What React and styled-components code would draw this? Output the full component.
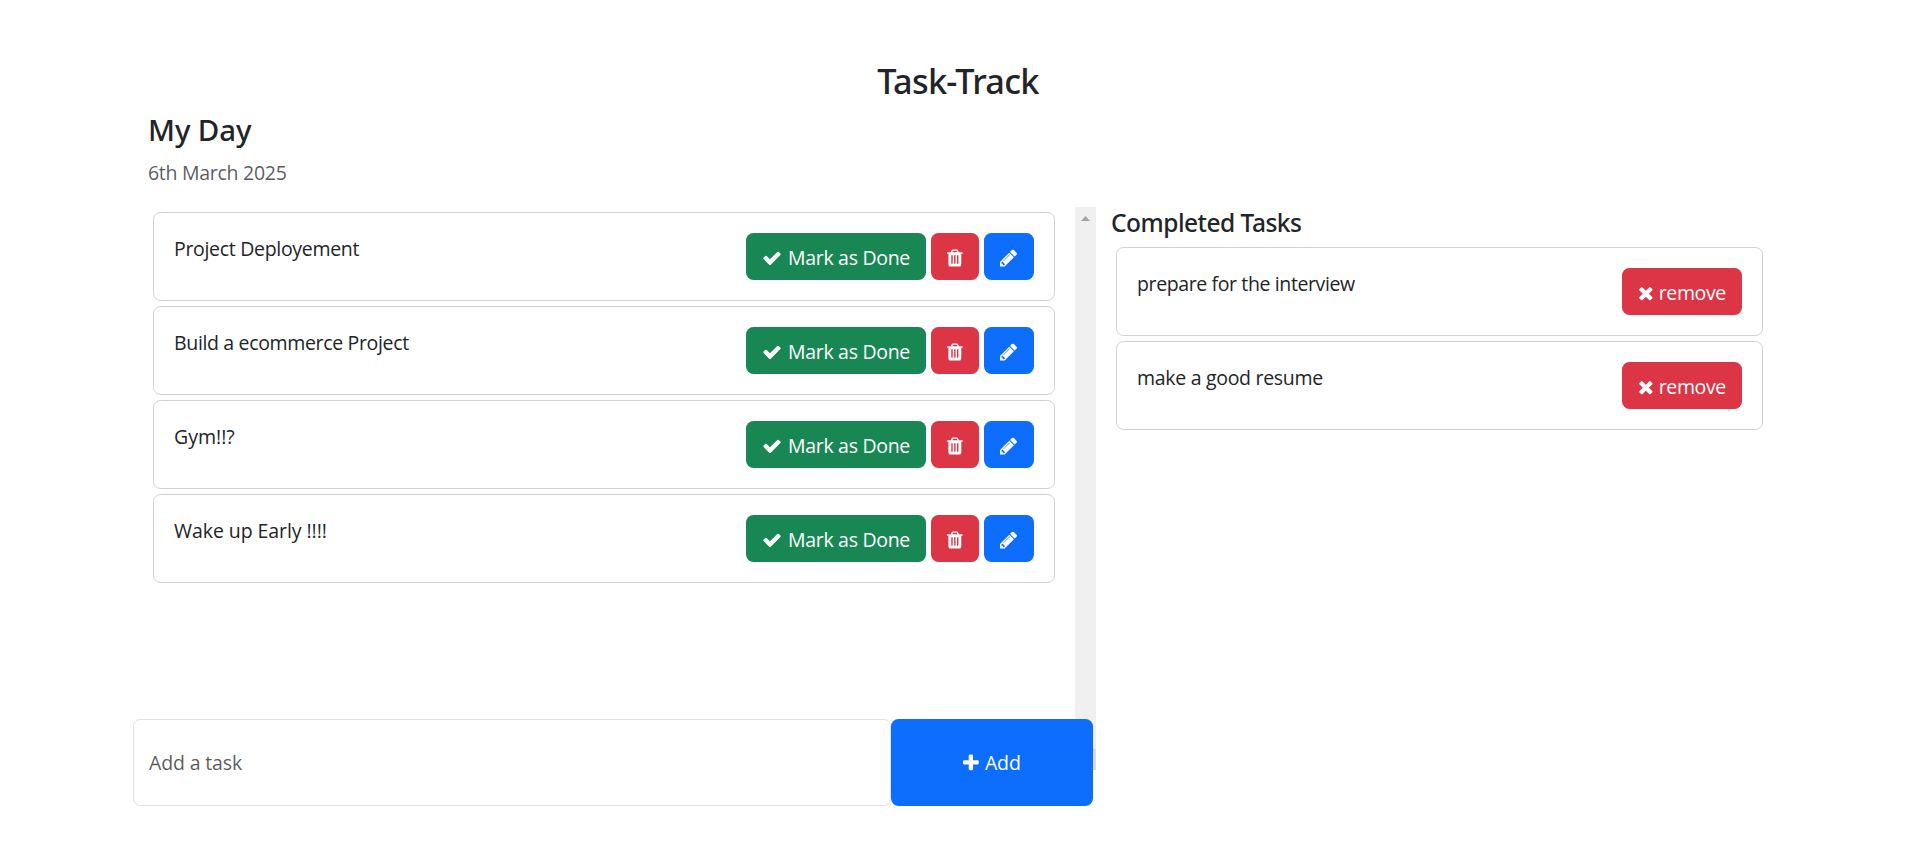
import React from "react";
import styled, { createGlobalStyle } from "styled-components";

const GlobalStyle = createGlobalStyle`
  *, *::before, *::after { box-sizing: border-box; }
  body {
    margin: 0;
    background: #fff;
    color: #212529;
    font: 400 19.5px/30px "Open Sans", "Noto Sans", sans-serif;
    letter-spacing: -0.3px;
  }
  h1, h2, h3, p, ul { margin: 0; padding: 0; }
`;

const Page = styled.main`
  padding: 60px 149px 0 148px;
`;

const heading = `
  font-family: "Noto Sans", sans-serif;
  font-weight: 500;
  line-height: 1.2245;
`;

const Title = styled.h1`
  ${heading}
  font-size: 34.3px;
  letter-spacing: -0.7px;
  text-align: center;
  margin-bottom: 10px;
`;

const DayHeading = styled.h2`
  ${heading}
  font-size: 29.4px;
  letter-spacing: -0.1px;
  margin-bottom: 10px;
`;

const DateLine = styled.p`
  color: rgba(33, 37, 41, 0.75);
  letter-spacing: -0.28px;
  margin-bottom: 19px;
`;

const Columns = styled.div`
  display: grid;
  grid-template-columns: 948px 657px;
  column-gap: 15px;
  align-items: start;
`;

const TaskPane = styled.div`
  display: flex;
  justify-content: space-between;
  height: 563px;
`;

const TaskList = styled.ul`
  width: ${(p) => p.$width || "auto"};
  padding: 5px;
  display: flex;
  flex-direction: column;
  gap: 5px;
  list-style: none;
`;

const TaskCard = styled.li`
  display: flex;
  justify-content: space-between;
  align-items: flex-start;
  height: 89px;
  padding: 20px;
  border: 1px solid #d0d1d2;
  border-radius: 7.5px;
`;

const TaskText = styled.span`
  padding-top: 1px;
  letter-spacing: ${(p) => p.$tracking};
`;

const Actions = styled.div`
  display: flex;
  gap: 5px;
`;

const buttonColors = { success: "#198754", danger: "#dc3545", primary: "#0d6efd" };

const Button = styled.button`
  display: flex;
  justify-content: center;
  align-items: flex-start;
  gap: 6px;
  width: ${(p) => p.$width}px;
  height: 47px;
  padding: 10px 0 0;
  border: 0;
  border-radius: 7.5px;
  background: ${(p) => buttonColors[p.$variant]};
  color: #fff;
  font: inherit;
  letter-spacing: inherit;
`;

const RemoveButton = styled(Button)`
  gap: 5px;
  letter-spacing: -0.38px;
`;

const Icon = styled.svg`
  flex: none;
  display: block;
  height: 20px;
  margin-top: 5px;
  fill: currentColor;
`;

const ScrollTrack = styled.div`
  display: flex;
  flex-direction: column;
  justify-content: space-between;
  width: 21px;
  background: #f0f0f0;
`;

const ScrollUp = styled.div`
  display: flex;
  justify-content: center;
  padding-top: 9px;
  height: 21px;
`;

const Arrow = styled.svg`
  display: block;
  width: 9px;
  height: 5px;
  fill: #a3a3a3;
`;

const ScrollDown = styled.div`
  height: 21px;
  background: #dadada;
`;

const Composer = styled.form`
  position: relative;
  display: flex;
  width: 960px;
  height: 87px;
  margin: -51px 0 0 -15px;
`;

const TaskInput = styled.input`
  width: 758px;
  padding: 2px 15px 0;
  border: 1px solid #dee2e6;
  border-radius: 7.5px;
  background: #fff;
  font: inherit;
  letter-spacing: -0.15px;
  color: #212529;
  &::placeholder { color: rgba(33, 37, 41, 0.75); opacity: 1; }
`;

const AddButton = styled(Button)`
  height: 87px;
  padding-top: 29px;
  letter-spacing: -0.1px;
`;

const CompletedHeading = styled.h3`
  ${heading}
  font-size: 24.5px;
  letter-spacing: -0.5px;
  padding-top: 1px;
  margin-bottom: 4px;
`;

const icons = {
  check: [0, 1792, "M1671 566q0 40-28 68l-724 724-136 136q-28 28-68 28t-68-28l-136-136-362-362q-28-28-28-68t28-68l136-136q28-28 68-28t68 28l294 295 656-657q28-28 68-28t68 28l136 136q28 28 28 68z"],
  times: [192, 1408, "M1490 1322q0 40-28 68l-136 136q-28 28-68 28t-68-28l-294-294-294 294q-28 28-68 28t-68-28l-136-136q-28-28-28-68t28-68l294-294-294-294q-28-28-28-68t28-68l136-136q28-28 68-28t68 28l294 294 294-294q28-28 68-28t68 28l136 136q28 28 28 68t-28 68l-294 294 294 294q28 28 28 68z"],
  plus: [192, 1408, "M1600 736v192q0 40-28 68t-68 28h-416v416q0 40-28 68t-68 28h-192q-40 0-68-28t-28-68v-416h-416q-40 0-68-28t-28-68v-192q0-40 28-68t68-28h416v-416q0-40 28-68t68-28h192q40 0 68 28t28 68v416h416q40 0 68 28t28 68z"],
  trash: [192, 1408, "M704 1376v-704q0-14-9-23t-23-9h-64q-14 0-23 9t-9 23v704q0 14 9 23t23 9h64q14 0 23-9t9-23zm256 0v-704q0-14-9-23t-23-9h-64q-14 0-23 9t-9 23v704q0 14 9 23t23 9h64q14 0 23-9t9-23zm256 0v-704q0-14-9-23t-23-9h-64q-14 0-23 9t-9 23v704q0 14 9 23t23 9h64q14 0 23-9t9-23zm-544-992h448l-48-117q-7-9-17-11h-317q-10 2-17 11zm928 32v64q0 14-9 23t-23 9h-96v948q0 83-47 143.5t-113 60.5h-832q-66 0-113-58.5t-47-141.5v-952h-96q-14 0-23-9t-9-23v-64q0-14 9-23t23-9h309l70-167q15-37 54-63t79-26h320q40 0 79 26t54 63l70 167h309q14 0 23 9t9 23z"],
  pencil: [128, 1536, "M491 1536l91-91-235-235-91 91v107h128v128h107zm523-928q0-22-22-22-10 0-17 7l-542 542q-7 7-7 17 0 22 22 22 10 0 17-7l542-542q7-7 7-17zm-54-192l416 416-832 832h-416v-416zm683 96q0 53-37 90l-166 166-416-416 166-165q36-38 90-38 53 0 91 38l235 234q37 39 37 91z"],
};

function Glyph({ name }) {
  const [x, w, d] = icons[name];
  return (
    <Icon viewBox={`${x} 0 ${w} 1792`} aria-hidden="true">
      <path d={d} />
    </Icon>
  );
}

const tasks = [
  { text: "Project Deployement", tracking: "-0.31px" },
  { text: "Build a ecommerce Project", tracking: "-0.34px" },
  { text: "Gym!!?", tracking: "0" },
  { text: "Wake up Early !!!!", tracking: "-0.07px" },
];

const completed = [
  { text: "prepare for the interview", tracking: "-0.38px" },
  { text: "make a good resume", tracking: "-0.3px" },
];

export default function App() {
  return (
    <Page>
      <GlobalStyle />
      <Title>Task-Track</Title>
      <DayHeading>My Day</DayHeading>
      <DateLine>6th March 2025</DateLine>
      <Columns>
        <section>
          <TaskPane>
            <TaskList $width="912px">
              {tasks.map((t) => (
                <TaskCard key={t.text}>
                  <TaskText $tracking={t.tracking}>{t.text}</TaskText>
                  <Actions>
                    <Button $variant="success" $width={180}><Glyph name="check" />Mark as Done</Button>
                    <Button $variant="danger" $width={48} aria-label="Delete"><Glyph name="trash" /></Button>
                    <Button $variant="primary" $width={50} aria-label="Edit"><Glyph name="pencil" /></Button>
                  </Actions>
                </TaskCard>
              ))}
            </TaskList>
            <ScrollTrack>
              <ScrollUp>
                <Arrow viewBox="0 0 9 5"><path d="M4.5 0L9 5H0z" /></Arrow>
              </ScrollUp>
              <ScrollDown />
            </ScrollTrack>
          </TaskPane>
          <Composer onSubmit={(e) => e.preventDefault()}>
            <TaskInput placeholder="Add a task" />
            <AddButton $variant="primary" $width={202}><Glyph name="plus" />Add</AddButton>
          </Composer>
        </section>
        <section>
          <CompletedHeading>Completed Tasks</CompletedHeading>
          <TaskList>
            {completed.map((t) => (
              <TaskCard key={t.text}>
                <TaskText $tracking={t.tracking}>{t.text}</TaskText>
                <RemoveButton $variant="danger" $width={120}><Glyph name="times" />remove</RemoveButton>
              </TaskCard>
            ))}
          </TaskList>
        </section>
      </Columns>
    </Page>
  );
}
